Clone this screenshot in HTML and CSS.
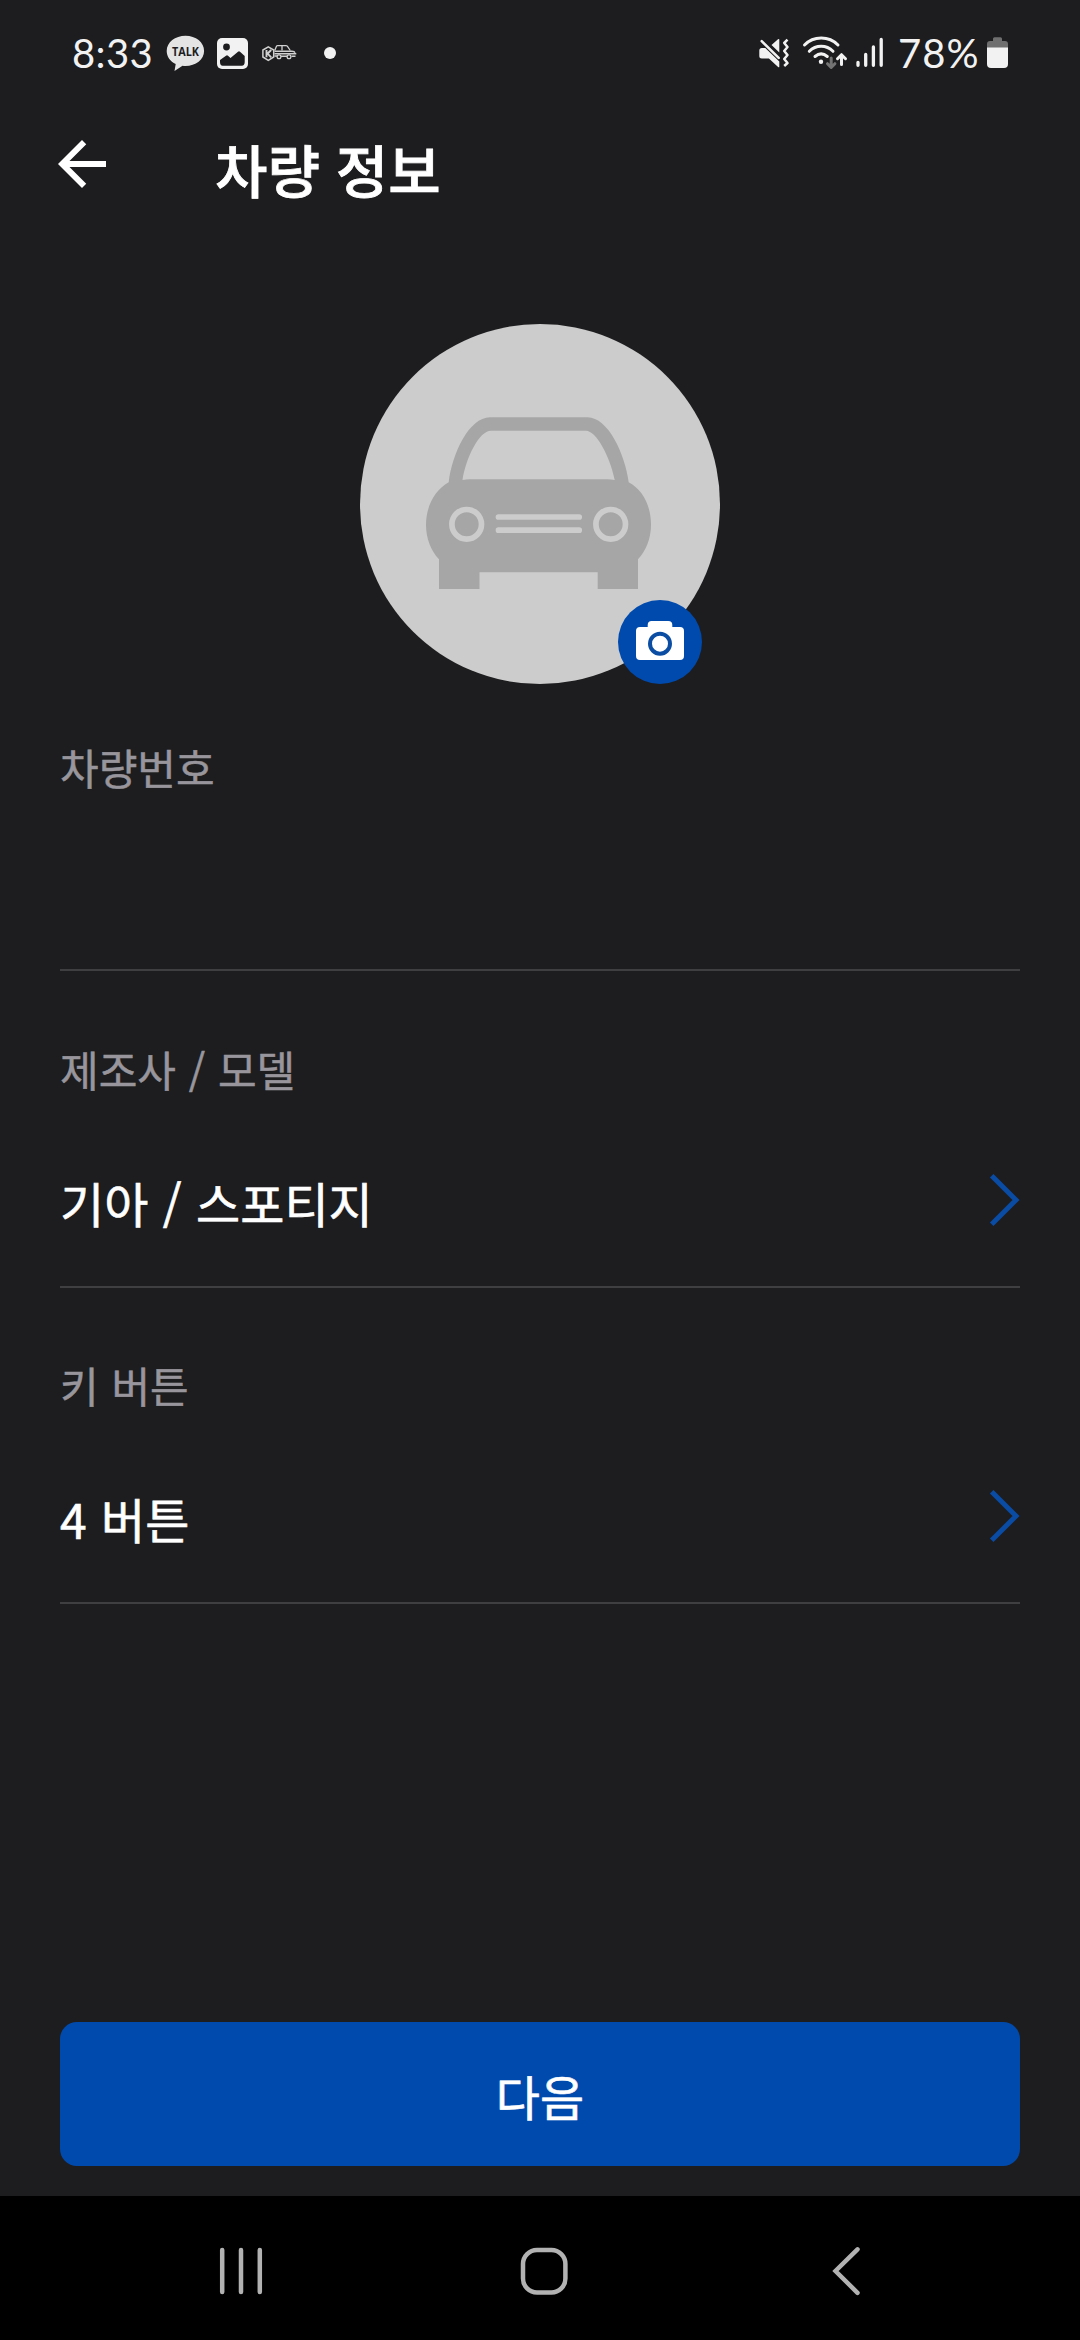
FILE: index.html
```html
<!DOCTYPE html>
<html lang="ko">
<head>
<meta charset="utf-8">
<title>차량 정보</title>
<link rel="stylesheet" href="styles.css">
</head>
<body>
<div class="screen">
  <header class="status">
    <div class="status-left">
      <span class="clock">8:33</span>
      <svg class="talk" width="40" height="40" viewBox="166 33 40 40">
        <path fill="#e4e4e4" d="M185.500 35.700c10.300 0 18.600 6.600 18.600 15.200s-8.300 15-18.600 15c-1 0-2-.1-3-.2l-8 5.300 1.200-7.100c-5.400-2.600-9-7.400-9-13 0-8.600 8.500-15.200 18.800-15.200z"/>
        <text class="talk-text" x="185.500" y="56" text-anchor="middle" textLength="27" lengthAdjust="spacingAndGlyphs">TALK</text>
      </svg>
      <svg class="photo" width="32" height="40" viewBox="217 33 32 40">
        <rect x="217" y="38" width="31" height="31" rx="5" fill="#f2f2f2"/>
        <circle cx="226.500" cy="47" r="3.400" fill="#1d1d1f"/>
        <path fill="#1d1d1f" d="M220 62v-2l6-4.200q1-.9 2 0l2.500 2.300 7.500-6.400q1-.8 2 0l4.700 4.300v6q0 3.700-3 3.700h-19q-2.700 0-2.700-3.700z"/>
      </svg>
      <svg class="keycar" width="36" height="40" viewBox="261 33 36 40" fill="none" stroke="#d0d0d0">
        <path stroke-width="1.500" d="M268.300 46.800l5.400 3.200v7l-5.400 3.300-5.400-3.300v-7z"/>
        <path stroke-width="1.900" d="M266.500 50v7.300M271.200 50l-3.600 3.600 3.600 3.700"/>
        <path stroke-width="1.300" d="M274.700 50.500l1.800-4.300q.3-.6 1-.6h8.500q.8 0 1.300.6l3 4.300M282 46v4.500"/>
        <path stroke-width="1.500" d="M274.500 51.300h17.500q2.500 0 3 1.500M274.500 53.800h21.800M274.500 56h3M281 56.300h6M291.500 56.300h4"/>
        <circle cx="279" cy="56.800" r="1.900" fill="#1d1d1f" stroke-width="1.300"/>
        <circle cx="289" cy="56.800" r="1.900" fill="#1d1d1f" stroke-width="1.300"/>
      </svg>
      <span class="dot"></span>
    </div>
    <div class="status-right">
      <svg class="mute" width="32" height="40" viewBox="758 33 32 40">
        <path fill="#f2f2f2" d="M759.300 50.500q0-2.500 2.500-2.500h3.500l14 13.500v5q0 1.400-1.200.5l-9.200-8.500h-7.100q-2.500 0-2.500-2.500zM771.500 45l6.500-5.700q1.300-1 1.300.5V52.500z"/>
        <path fill="none" stroke="#f2f2f2" stroke-width="2.500" stroke-linecap="round" d="M761.700 41.200l17 16.700"/>
        <path fill="none" stroke="#f2f2f2" stroke-width="2.500" stroke-linejoin="round" d="M787.500 39.700l-3.300 3.300 3.300 4-3.300 4 3.300 4-3.300 4 3.300 4-3.300 3"/>
      </svg>
      <svg class="wifi" width="46" height="40" viewBox="802 33 46 40" fill="none" stroke="#f2f2f2" stroke-linecap="round">
        <path stroke-width="3" d="M804.500 45c9-9.300 24.500-9.300 33.500 0M809.300 51.300c6.700-6.700 17-6.700 23.700 0"/>
        <path stroke-width="3" d="M815 56.500c3.800-3.200 8.500-3.200 12.300 0"/>
        <circle cx="821" cy="61.700" r="2.200" fill="#f2f2f2" stroke="none"/>
        <path stroke="#1d1d1f" stroke-width="6" d="M831 60v6"/>
        <path stroke="#737373" stroke-width="3" stroke-linejoin="round" d="M831.200 58v9M827.500 63.700l3.700 3.700 3.700-3.700"/>
        <path stroke-width="3" stroke-linejoin="round" d="M841.500 64.500V55.500M837.500 58.700l4-4 4 4"/>
      </svg>
      <svg class="signal" width="28" height="40" viewBox="856 33 28 40" fill="none" stroke="#f2f2f2" stroke-width="3.300" stroke-linecap="round">
        <path d="M858 62.300v3M865.700 54.500v10.800M873.400 47v18.300M881.200 39.500v25.800"/>
      </svg>
      <span class="percent">78%</span>
      <svg class="battery" width="22" height="40" viewBox="987 33 22 40">
        <path fill="#6f6f70" d="M987 48v-4q0-3 3-3h3v-2.200q0-1.500 1.500-1.500h6q1.500 0 1.500 1.500V41h3q3 0 3 3v4z"/>
        <path fill="#f2f2f2" d="M987 47.500h21V64q0 4-4 4h-13q-4 0-4-4z"/>
      </svg>
    </div>
  </header>

  <div class="appbar">
    <svg class="back" width="72" height="72" viewBox="0 0 24 24"><path fill="#fff" d="M20 11H7.830l5.590-5.590L12 4l-8 8 8 8 1.410-1.410L7.830 13H20v-2z"/></svg>
    <h1 class="title">차량 정보</h1>
  </div>

  <main class="content">
    <div class="avatar">
      <svg width="360" height="360" viewBox="0 0 360 360">
        <circle cx="180" cy="180" r="180" fill="#ccc"/>
        <path fill="#a6a6a6" fill-rule="evenodd" d="M88.700 158.300C92 130 109 93.300 130 93.300H227.500C248 93.300 265 130 268.700 158.300C283 166 291 182 291 201C291 214 286 227 278 235.300V265H237.700V248.300H119.500V265H79V235.300C71 227 66 214 66 201C66 182 75 166 88.700 158.300ZM102.500 156Q106 155.300 110 155.300H247Q251 155.300 254.700 156C250 132 236 106.700 226 106.700H131C119 106.700 106 134 102.500 156Z"/>
        <g fill="none" stroke="#ccc" stroke-width="5.700">
          <circle cx="106.700" cy="200.300" r="14.800"/>
          <circle cx="250.700" cy="200.300" r="14.800"/>
          <path stroke-linecap="round" d="M138.500 193H219.200M138.500 206.200H219.200"/>
        </g>
      </svg>
      <svg class="camera" width="84" height="84" viewBox="0 0 84 84">
        <circle cx="42" cy="42" r="42" fill="#004aad"/>
        <path fill="#fff" d="M22 27H29.700V25Q29.700 21 33.700 21H50.300Q54.300 21 54.300 25V27H62Q66 27 66 31V56Q66 60 62 60H22Q18 60 18 56V31Q18 27 22 27Z"/>
        <circle cx="42" cy="43.700" r="10" fill="#fff" stroke="#0b4da2" stroke-width="4"/>
      </svg>
    </div>

    <section class="field field-number">
      <div class="label">차량번호</div>
    </section>
    <section class="field">
      <div class="label">제조사 / 모델</div>
      <div class="value">
        <span>기아 / 스포티지</span>
        <svg class="chevron" width="32" height="56" viewBox="0 0 32 56"><path fill="none" stroke="#0a4ba3" stroke-width="5" d="M3.700 3.700L28 28L3.700 52.300"/></svg>
      </div>
    </section>
    <section class="field">
      <div class="label">키 버튼</div>
      <div class="value">
        <span>4 버튼</span>
        <svg class="chevron" width="32" height="56" viewBox="0 0 32 56"><path fill="none" stroke="#0a4ba3" stroke-width="5" d="M3.700 3.700L28 28L3.700 52.300"/></svg>
      </div>
    </section>
    <button class="next" type="button">다음</button>
  </main>

  <nav class="navbar">
    <svg width="60" height="60" viewBox="211 2241 60 60" stroke="#b2b2b2" stroke-width="4.500" stroke-linecap="round"><path d="M222.200 2250v42M241 2250v42M259.800 2250v42"/></svg>
    <svg width="60" height="60" viewBox="513 2241 60 60" fill="none" stroke="#b2b2b2" stroke-width="4.500"><rect x="522" y="2250" width="42.400" height="42.500" rx="14"/></svg>
    <svg width="60" height="60" viewBox="816 2241 60 60" fill="none" stroke="#b2b2b2" stroke-width="4.500" stroke-linecap="round"><path d="M857.500 2249.300L835.500 2271L857.500 2292.800"/></svg>
  </nav>
</div>
</body>
</html>
```
FILE: styles.css
```css
* { box-sizing: border-box; }

body {
  margin: 0;
  background: #1d1d1f;
  color: #fff;
  font-family: "Noto Sans CJK KR", sans-serif;
}

svg { display: block; flex: none; }

.screen {
  width: 1080px;
  height: 2340px;
  display: flex;
  flex-direction: column;
}

.status {
  height: 106px;
  display: flex;
  justify-content: space-between;
  padding: 0 71px 0 72px;
  color: #f2f2f2;
  font: 400 40px/106px Lato, sans-serif;
  letter-spacing: 0.4px;
}

.status-left,
.status-right {
  display: flex;
  align-items: center;
}

.clock { width: 80px; white-space: nowrap; }
.talk { margin-left: 14px; }
.talk-text {
  font: 700 13px "Open Sans", sans-serif;
  letter-spacing: 0;
  fill: #1d1d1f;
}
.photo { margin-left: 11px; }
.keycar { margin-left: 12px; }

.dot {
  width: 12px;
  height: 12px;
  margin-left: 27px;
  border-radius: 50%;
  background: #f2f2f2;
}

.wifi { margin-left: 12px; }
.signal { margin-left: 8px; }
.percent {
  width: 82px;
  margin-left: 14px;
  letter-spacing: 1px;
  white-space: nowrap;
}
.battery { margin-left: 7px; }

.appbar {
  height: 124px;
  display: flex;
  align-items: center;
  padding: 0 46px 8px;
}

.title {
  margin: 0 0 0 97px;
  padding-top: 7px;
  font-size: 57px;
  font-weight: 500;
  line-height: 80px;
  -webkit-text-stroke: 0.8px #fff;
}

.content {
  height: 1966px;
  display: flex;
  flex-direction: column;
  padding: 94px 60px 30px;
}

.avatar {
  position: relative;
  width: 360px;
  align-self: center;
}

.camera {
  position: absolute;
  right: 18px;
  bottom: 0;
}

.field {
  height: 316px;
  padding-top: 67px;
  border-bottom: 2px solid #3f3f42;
}

.field-number {
  height: 287px;
  margin-bottom: 1px;
  padding-top: 53px;
}

.label {
  color: #98969c;
  font-size: 42px;
  line-height: 60px;
  word-spacing: 1px;
  -webkit-text-stroke: 0.5px #98969c;
}

.value {
  height: 100px;
  margin-top: 53px;
  display: flex;
  align-items: center;
  justify-content: space-between;
  font-size: 48px;
  line-height: 100px;
  word-spacing: 1px;
  -webkit-text-stroke: 0.6px #fff;
}

.chevron { margin-bottom: 4px; }

.next {
  height: 144px;
  margin-top: auto;
  padding: 2px 0 0;
  border: 0;
  border-radius: 17px;
  background: #004aad;
  color: #fff;
  font: 400 48px/142px "Noto Sans CJK KR", sans-serif;
  -webkit-text-stroke: 0.6px #fff;
}

.navbar {
  height: 144px;
  display: flex;
  align-items: center;
  justify-content: space-between;
  padding: 6px 204px 0 211px;
  background: #000;
}
```
